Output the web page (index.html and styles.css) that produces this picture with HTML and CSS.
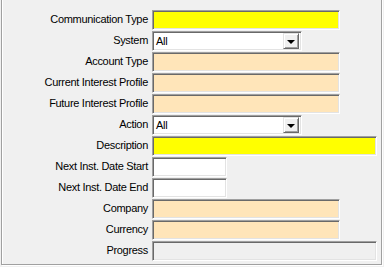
FILE: index.html
```html
<!DOCTYPE html>
<html>
<head>
<meta charset="utf-8">
<link rel="stylesheet" href="styles.css">
</head>
<body>
<div class="frame">
  <div class="form">
    <label class="lbl">Communication Type</label>
    <div class="fld yellow w-mid"></div>

    <label class="lbl">System</label>
    <div class="combo"><span class="val">All</span><span class="btn"><span class="tri"></span></span></div>

    <label class="lbl">Account Type</label>
    <div class="fld peach w-mid"></div>

    <label class="lbl">Current Interest Profile</label>
    <div class="fld peach w-mid"></div>

    <label class="lbl">Future Interest Profile</label>
    <div class="fld peach w-mid"></div>

    <label class="lbl">Action</label>
    <div class="combo"><span class="val">All</span><span class="btn"><span class="tri"></span></span></div>

    <label class="lbl">Description</label>
    <div class="fld yellow w-full"></div>

    <label class="lbl">Next Inst. Date Start</label>
    <div class="fld white w-short"></div>

    <label class="lbl">Next Inst. Date End</label>
    <div class="fld white w-short"></div>

    <label class="lbl">Company</label>
    <div class="fld peach w-mid"></div>

    <label class="lbl">Currency</label>
    <div class="fld peach w-mid"></div>

    <label class="lbl">Progress</label>
    <div class="fld grey w-full"></div>
  </div>
</div>
</body>
</html>
```
FILE: styles.css
```css
html, body {
  margin: 0;
  padding: 0;
  background: #f0f0f0;
  width: 384px;
  height: 267px;
  overflow: hidden;
}
body {
  font-family: "Liberation Sans", Arial, sans-serif;
  font-size: 11px;
  letter-spacing: -0.3px;
  color: #000;
}
.frame {
  margin-left: 1px;
  margin-top: -10px;
  width: 379px;
  height: 273px;
  border: 1px solid #a0a0a0;
  box-shadow: 1px 1px 0 #fff, inset 1px 1px 0 #fff;
  box-sizing: content-box;
}
.form {
  display: grid;
  grid-template-columns: 146px 1fr;
  column-gap: 4px;
  row-gap: 1px;
  grid-auto-rows: 20px;
  padding-top: 19px;
}
.lbl {
  text-align: right;
  line-height: 19px;
  white-space: nowrap;
}
.fld {
  box-sizing: border-box;
  height: 20px;
  border-top: 1px solid #a0a0a0;
  border-left: 1px solid #a0a0a0;
  border-right: 1px solid #fff;
  border-bottom: 1px solid #fff;
  box-shadow: inset 1px 1px 0 #696969, inset -1px -1px 0 #e3e3e3;
}
.yellow { background: #ffff00; }
.peach { background: #ffe5b9; }
.white { background: #fff; }
.grey { background: #f0f0f0; }
.w-mid { width: 188px; }
.w-full { width: 225px; }
.w-short { width: 75px; }
.combo {
  box-sizing: border-box;
  width: 150px;
  height: 20px;
  background: #fff;
  border-top: 1px solid #a0a0a0;
  border-left: 1px solid #a0a0a0;
  border-right: 1px solid #fff;
  border-bottom: 1px solid #fff;
  box-shadow: inset 1px 1px 0 #696969, inset -1px -1px 0 #e3e3e3;
  display: flex;
  align-items: center;
  padding: 2px 2px 2px 3px;
}
.val {
  flex: 1;
  line-height: 14px;
}
.btn {
  box-sizing: border-box;
  width: 16px;
  height: 16px;
  background: #f0f0f0;
  border-top: 1px solid #e3e3e3;
  border-left: 1px solid #e3e3e3;
  border-right: 1px solid #696969;
  border-bottom: 1px solid #696969;
  box-shadow: inset 1px 1px 0 #fff, inset -1px -1px 0 #a0a0a0;
  display: flex;
  align-items: center;
  justify-content: center;
}
.tri {
  width: 0;
  height: 0;
  border-left: 4px solid transparent;
  border-right: 4px solid transparent;
  border-top: 4px solid #000;
  margin-top: 1px;
}
```
